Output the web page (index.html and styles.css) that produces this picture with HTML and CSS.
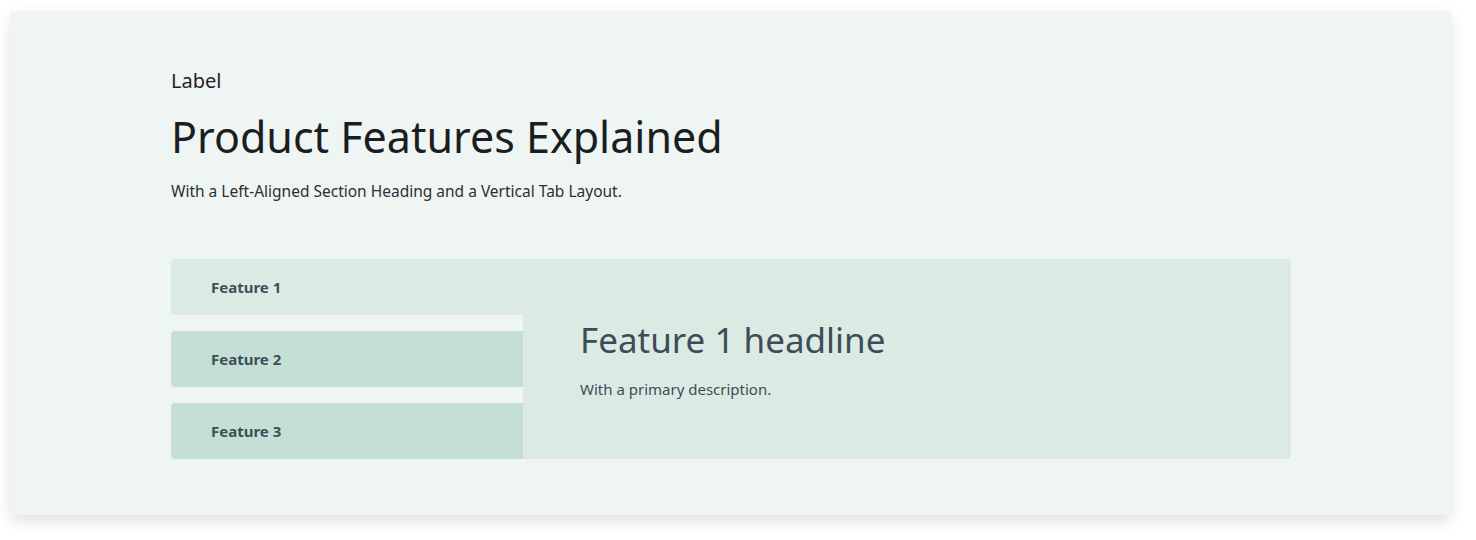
FILE: index.html
```html
<!DOCTYPE html>
<html>
<head>
<meta charset="utf-8">
<link rel="stylesheet" href="styles.css">
</head>
<body>
<section class="card">
  <div class="inner">
    <p class="label">Label</p>
    <h1 class="title">Product Features Explained</h1>
    <p class="subtitle">With a Left-Aligned Section Heading and a Vertical Tab Layout.</p>
    <div class="tabs">
      <div class="tablist">
        <div class="tab active">Feature 1</div>
        <div class="tab">Feature 2</div>
        <div class="tab">Feature 3</div>
      </div>
      <div class="panel">
        <h2 class="panel-title">Feature 1 headline</h2>
        <p class="panel-text">With a primary description.</p>
      </div>
    </div>
  </div>
</section>
</body>
</html>
```
FILE: styles.css
```css
html, body {
  margin: 0;
  padding: 0;
  background: #ffffff;
}
body {
  padding: 11px 25px 25px 11px;
  font-family: "Noto Sans", "Open Sans", sans-serif;
}
.card {
  width: 1440px;
  height: 504px;
  box-sizing: border-box;
  background: #eff5f3;
  box-shadow: 0 6px 14px rgba(0,0,0,0.12);
  padding: 58px 160px 0 160px;
}
.inner {
  display: flex;
  flex-direction: column;
}
.label {
  margin: 0;
  font-size: 20px;
  line-height: 24px;
  color: #1f2427;
}
.title {
  margin: 18px 0 0 0;
  font-size: 43px;
  font-weight: 400;
  line-height: 52px;
  color: #1a1e21;
}
.subtitle {
  margin: 17px 0 0 0;
  font-size: 15.5px;
  line-height: 22px;
  color: #2a3034;
}
.tabs {
  display: flex;
  margin-top: 57px;
  height: 200px;
}
.tablist {
  width: 352px;
  display: flex;
  flex-direction: column;
  gap: 16px;
}
.tab {
  height: 56px;
  display: flex;
  align-items: center;
  padding-left: 40px;
  background: #c4dfd5;
  border-radius: 4px 0 0 4px;
  font-size: 15px;
  font-weight: 700;
  color: #404e57;
}
.tab.active {
  background: #dbebe4;
}
.panel {
  width: 768px;
  box-sizing: border-box;
  background: #dbebe4;
  border-radius: 0 4px 4px 0;
  padding: 59px 56px 0 57px;
}
.panel-title {
  margin: 0;
  font-size: 35px;
  font-weight: 400;
  line-height: 44px;
  color: #3e4c57;
}
.panel-text {
  margin: 16px 0 0 0;
  font-size: 15px;
  line-height: 22px;
  color: #3e4c57;
}
```
